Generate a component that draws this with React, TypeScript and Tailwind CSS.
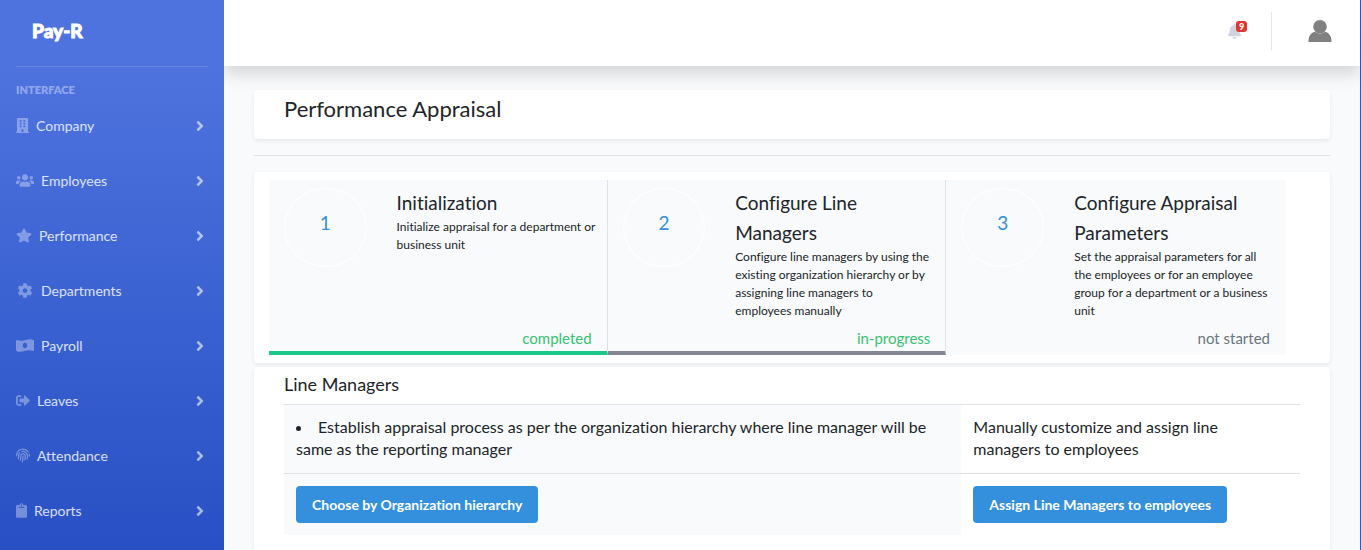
import React from 'react';
import {
  FaAngleRight,
  FaBell,
  FaBuilding,
  FaClipboard,
  FaCog,
  FaFingerprint,
  FaSignOutAlt,
  FaStar,
  FaUsers,
} from 'react-icons/fa';

type NavEntry = { label: string; icon: React.ComponentType<{ className?: string }>; box: string };

function BanknoteIcon({ className }: { className?: string }) {
  return (
    <svg viewBox="0 0 640 512" fill="currentColor" className={className} aria-hidden="true">
      <path
        fillRule="evenodd"
        d="M621 64C587 43 548 34 500 34 380 34 300 88 200 88 130 88 75 76 44 64 22 56 0 72 0 94v326c0 12 7 22 18 28 34 21 80 30 126 30 120 0 196-54 296-54 70 0 125 12 156 24 22 8 44-8 44-30V92c0-12-8-22-19-28zM320 352c-44 0-80-43-80-96s36-96 80-96 80 43 80 96-36 96-80 96z"
      />
    </svg>
  );
}

const NAV: NavEntry[] = [
  { label: 'Company', icon: FaBuilding, box: 'w-[13px]' },
  { label: 'Employees', icon: FaUsers, box: 'w-[18px]' },
  { label: 'Performance', icon: FaStar, box: 'w-4' },
  { label: 'Departments', icon: FaCog, box: 'w-[18px]' },
  { label: 'Payroll', icon: BanknoteIcon, box: 'w-[18px]' },
  { label: 'Leaves', icon: FaSignOutAlt, box: 'w-[14px]' },
  { label: 'Attendance', icon: FaFingerprint, box: 'w-[14px]' },
  { label: 'Reports', icon: FaClipboard, box: 'w-[11px]' },
];

const STEPS = [
  {
    title: 'Initialization',
    text: 'Initialize appraisal for a department or\nbusiness unit',
    status: 'completed',
    frame: 'border-r border-b-4 border-r-[#dee2e6] border-b-[#1cc88a]',
    tone: 'text-[#38c172]',
  },
  {
    title: 'Configure Line Managers',
    text: 'Configure line managers by using the existing organization hierarchy or by assigning line managers to\nemployees manually',
    status: 'in-progress',
    frame: 'border-r border-b-4 border-r-[#dee2e6] border-b-[#858796]',
    tone: 'text-[#38c172]',
  },
  {
    title: 'Configure Appraisal Parameters',
    text: 'Set the appraisal parameters for all\nthe employees or for an employee\ngroup for a department or a business unit',
    status: 'not started',
    frame: 'border-b-4 border-b-transparent',
    tone: 'text-[#6c757d]',
  },
];

function Sidebar() {
  return (
    <aside className="z-10 w-56 shrink-0 bg-linear-to-b from-[#4e73df] from-12% to-[#2850c4] px-4">
      <a
        href="#"
        className="flex h-[66px] items-center px-4 pb-1 text-[19px] font-black text-white [-webkit-text-stroke:1px_white]"
      >
        Pay-R
      </a>
      <hr className="border-white/15" />
      <h2 className="mt-[15px] text-[11px] leading-4 font-extrabold text-white/40">INTERFACE</h2>
      <nav>
        {NAV.map(({ label, icon: Icon, box }) => (
          <a key={label} href="#" className="flex h-[55px] items-center gap-[7px] text-sm text-white/80">
            <Icon className={`h-[15px] shrink-0 text-white/35 ${box}`} />
            <span className="grow">{label}</span>
            <FaAngleRight className="h-4 w-4 text-white/60" />
          </a>
        ))}
      </nav>
    </aside>
  );
}

function Topbar() {
  return (
    <header className="flex h-[66px] shrink-0 items-center justify-end bg-white pb-1 shadow-[0_8px_16px_rgba(0,0,0,0.15)]">
      <button type="button" aria-label="Alerts" className="relative mr-[30px] text-[#d1d3e2]">
        <FaBell className="h-[15px] w-[13px]" />
        <span className="absolute -top-[3px] left-2 flex h-[11px] w-[11px] items-center justify-center rounded-[3px] bg-[#e3342f] text-[9px] leading-none font-black text-white">
          9
        </span>
      </button>
      <div className="h-[38px] border-l border-[#e3e6f0]" />
      <button type="button" aria-label="Account" className="mr-7 ml-9">
        <svg viewBox="0 0 24 22" className="h-[22px] w-6" fill="#808080">
          <path d="M.5 21.9C.2 16 3.200 12.600 7 11.800c3 2.400 7 2.400 10 0 3.800.8 6.800 4.200 6.500 10.100z" />
          <circle cx="12" cy="6.800" r="6.800" />
        </svg>
      </button>
    </header>
  );
}

function Steps() {
  return (
    <section className="mt-4 rounded bg-white py-2 pr-[45px] pl-[15px] shadow-[0_2px_4px_rgba(0,0,0,0.075)]">
      <ol className="grid grid-cols-3">
        {STEPS.map((step, i) => (
          <li key={step.title} className={`flex flex-col bg-[#f8fafc] ${step.frame}`}>
            <div className="grid grow grid-cols-3 pt-2">
              <div className="px-[15px]">
                <div className="flex h-[79px] justify-center rounded-[50%] border border-white pt-[19px] text-[19px] leading-[30px] text-[#3490dc]">
                  {i + 1}
                </div>
              </div>
              <div className="col-span-2 pr-2 pl-[15px]">
                <h3 className="text-[19px] leading-[30px]">{step.title}</h3>
                <p className="text-xs leading-[18px] whitespace-pre-line">{step.text}</p>
              </div>
            </div>
            <p className={`mt-[7px] px-[15px] pb-0.5 text-right text-[15px] leading-[22px] ${step.tone}`}>
              {step.status}
            </p>
          </li>
        ))}
      </ol>
    </section>
  );
}

function LineManagers() {
  const button = 'h-[37px] rounded bg-[#3490dc] px-4 text-sm font-bold whitespace-nowrap text-white';
  return (
    <section className="mt-1 grow rounded-t bg-white px-[30px] pt-1.5 shadow-[0_2px_4px_rgba(0,0,0,0.075)]">
      <h2 className="text-lg leading-[22px]">Line Managers</h2>
      <table className="mt-[9px] w-full table-fixed text-left text-base leading-[22px]">
        <tbody>
          <tr className="border-t border-[#dee2e6]">
            <td className="w-2/3 bg-[#f8fafc] px-3 pt-[11px] pb-[13px] align-top">
              <ul className="list-inside list-disc">
                <li>
                  Establish appraisal process as per the organization hierarchy where line manager will be same as the
                  reporting manager
                </li>
              </ul>
            </td>
            <td className="px-3 pt-[11px] pb-[13px] align-top">
              Manually customize and assign line managers to employees
            </td>
          </tr>
          <tr className="border-t border-[#dee2e6]">
            <td className="bg-[#f8fafc] p-3 leading-none">
              <button type="button" className={button}>
                Choose by Organization hierarchy
              </button>
            </td>
            <td className="p-3 leading-none">
              <button type="button" className={button}>
                Assign Line Managers to employees
              </button>
            </td>
          </tr>
        </tbody>
      </table>
    </section>
  );
}

export default function App() {
  return (
    <div className="flex min-h-screen border-r border-[#3058cc] bg-[#f8fafc] font-['Lato',sans-serif] text-[#212529] [font-variant-ligatures:none]">
      <Sidebar />
      <div className="flex min-w-0 grow flex-col">
        <Topbar />
        <main className="flex grow flex-col px-[30px] pt-6">
          <section className="rounded bg-white px-[30px] pt-1 pb-[15px] shadow-[0_2px_4px_rgba(0,0,0,0.075)]">
            <h1 className="text-[22px] leading-[30px]">Performance Appraisal</h1>
          </section>
          <hr className="mt-4 border-[#dee2e6]" />
          <Steps />
          <LineManagers />
        </main>
      </div>
    </div>
  );
}
